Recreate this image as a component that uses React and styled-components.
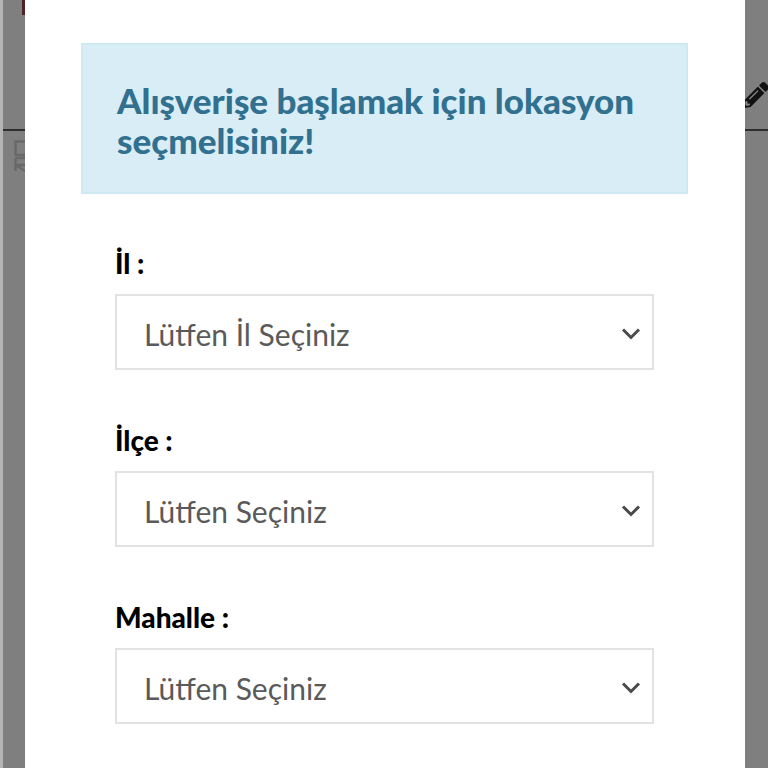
import React from 'react';
import styled, { createGlobalStyle } from 'styled-components';
import { FaPencilAlt } from 'react-icons/fa';

const Global = createGlobalStyle`
html, body {
  margin: 0;
  padding: 0;
  background: #7f7f7f;
}
* {
  box-sizing: border-box;
}
`

const Page = styled.div`
width: 768px;
height: 768px;
position: relative;
overflow: hidden;
background: #7f7f7f;
border-left: 3px solid #b4b4b4;
font-family: "Lato", "Noto Sans", sans-serif;
`

const BackHeader = styled.div`
height: 131px;
border-bottom: 2px solid #2e2e2e;
display: flex;
justify-content: flex-end;
align-items: flex-end;
padding: 0 0 21px 0;
`

const RedMark = styled.div`
position: absolute;
left: 19px;
top: 0;
width: 3px;
height: 15px;
background: #4f2226;
`

const Pencil = styled(FaPencilAlt)`
width: 26px;
height: 26px;
color: #111;
margin-right: -1px;
`

const BackIcon = styled.svg`
display: block;
margin: 9px 0 0 11px;
`

const Modal = styled.div`
position: absolute;
left: 22px;
top: 0;
width: 720px;
height: 768px;
background: #fff;
padding: 43px 57px 0 56px;
display: flex;
flex-direction: column;
`

const Alert = styled.div`
height: 151px;
background: #d9edf7;
border: 2px solid #cfe9f2;
padding: 35px 34px 0;
color: #31708f;
font-size: 35px;
line-height: 40px;
font-weight: 900;
`

const Form = styled.div`
padding: 51px 34px 0;
display: flex;
flex-direction: column;
gap: 52px;
`

const Field = styled.div`
display: flex;
flex-direction: column;
gap: 13px;
`

const Label = styled.div`
font-size: 28px;
line-height: 36px;
font-weight: 900;
color: #000;
`

const Select = styled.div`
height: 76px;
border: 2px solid #e2e2e2;
display: flex;
align-items: center;
justify-content: space-between;
padding: 3px 11px 0 27px;
font-size: 30px;
color: #5a5a5a;
`

const Chevron = () => (
  <svg width="20" height="14" viewBox="0 0 20 14" fill="none">
    <path d="M2 2.5 L10 10.5 L18 2.5" stroke="#4a4a4a" strokeWidth="3" />
  </svg>
)

const fields = [
  { label: 'İl :', placeholder: 'Lütfen İl Seçiniz' },
  { label: 'İlçe :', placeholder: 'Lütfen Seçiniz' },
  { label: 'Mahalle :', placeholder: 'Lütfen Seçiniz' },
]

export default function App() {
  return (
    <Page>
      <Global />
      <BackHeader>
        <Pencil />
      </BackHeader>
      <BackIcon width="11" height="33" viewBox="0 0 11 33" fill="none">
        <path d="M11 1.5 H1.5 V15 H11 M1.5 18 H11 M1.5 18 V31 M1.5 25 H11 M1.5 25 L11 31" stroke="#696969" strokeWidth="2.5" />
      </BackIcon>
      <RedMark />
      <Modal>
        <Alert>Alışverişe başlamak için lokasyon seçmelisiniz!</Alert>
        <Form>
          {fields.map(f => (
            <Field key={f.label}>
              <Label>{f.label}</Label>
              <Select>
                {f.placeholder}
                <Chevron />
              </Select>
            </Field>
          ))}
        </Form>
      </Modal>
    </Page>
  );
}
